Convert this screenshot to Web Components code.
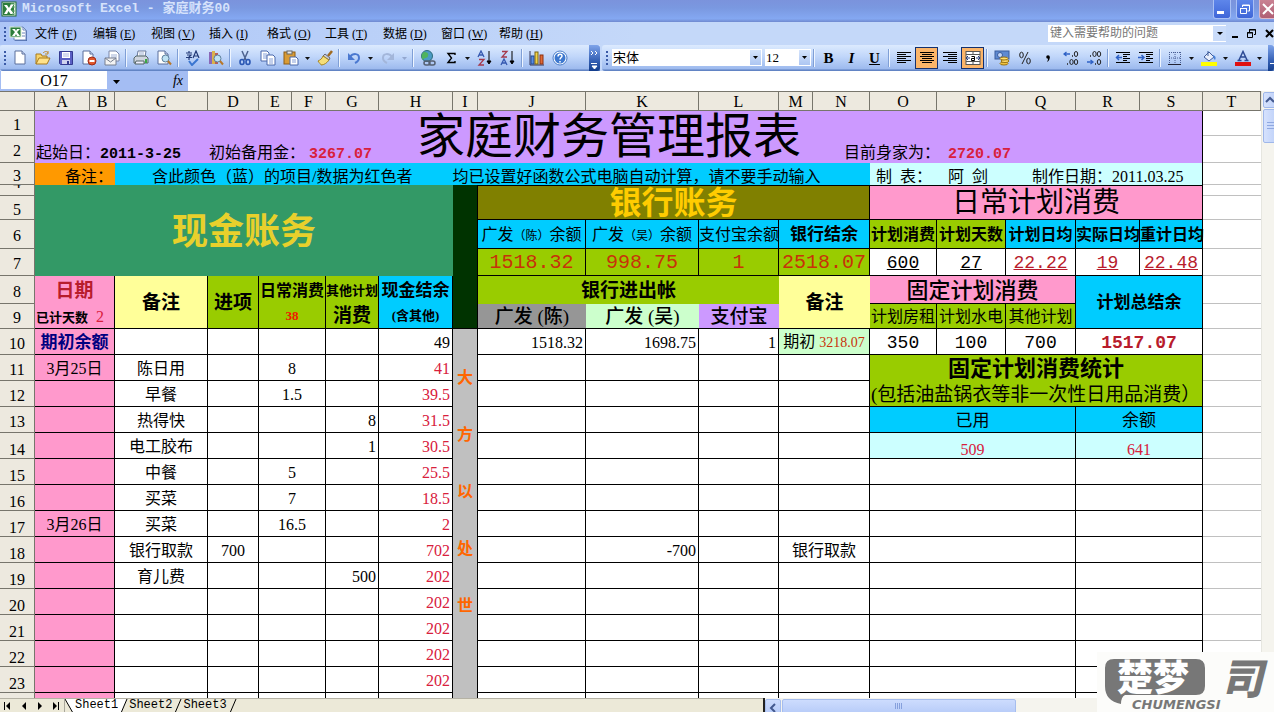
<!DOCTYPE html>
<html lang="zh-CN">
<head>
<meta charset="utf-8">
<title>Microsoft Excel - 家庭财务00</title>
<style>
html, body { height: 100%; margin: 0; overflow: hidden; }
body { font-family: "Liberation Serif", "Noto Sans CJK SC", serif; font-size: 16px; color: #000; }
</style>
</head>
<body>
<excel-window>
  <title-bar slot="bars">Microsoft Excel - 家庭财务00</title-bar>
  <menu-bar slot="bars"></menu-bar>
  <tool-rows slot="bars"></tool-rows>
  <formula-bar slot="bars"></formula-bar>
  <sheet-grid slot="sheet"></sheet-grid>
  <sheet-tabs slot="foot"></sheet-tabs>
  <brand-mark slot="over"></brand-mark>
</excel-window>

<script>
const RESET = `
  * { box-sizing: border-box; }
  button, select, input { margin: 0; padding: 0; border: 0; background: none; font: inherit; color: inherit; border-radius: 0; outline: none; }
  svg { display: block; }
`;

function define(name, css, html) {
  customElements.define(name, class extends HTMLElement {
    constructor() {
      super();
      const root = this.attachShadow({ mode: "open" });
      root.innerHTML = `<style>${RESET}${css}</style>` + (typeof html === "function" ? html(this) : html);
    }
  });
}

define("excel-window", `
  :host { display: flex; flex-direction: column; height: 100vh; position: relative; overflow: hidden; background: #fff; }
  main { flex: 1; min-height: 0; display: flex; }
`, `<slot name="bars"></slot><main><slot name="sheet"></slot></main><slot name="foot"></slot><slot name="over"></slot>`);

/* ---------- title bar ---------- */
const LOGO = `<svg width="16" height="16" viewBox="0 0 16 16"><rect x="1" y="1" width="14" height="14" fill="#e9f3e4" stroke="#1c6b34"/><rect x="2" y="2" width="11" height="12" fill="#2c7d3c"/><path d="M3 4h3l2 3 2-4h3L9.500 8.500 13 13H9.500L7.500 10 6 13H3l3-5z" fill="#fff"/><path d="M10 3h4M11 6h3M11 10h3M11 13h3" stroke="#6aa978"/></svg>`;
const BOOK = `<svg width="20" height="16" viewBox="0 0 20 16"><path d="M6 2h9l3 3v10H6z" fill="#4f6fae"/><path d="M5 1h9l3 3v10H5z" fill="#fff" stroke="#6d86bc"/><path d="M14 1v3h3M13 7h3M13 10h3" fill="none" stroke="#6d86bc"/><rect x="1" y="1" width="11" height="10" fill="#2c7d3c" stroke="#d6ecd4"/><path d="M3 3h3l1 2 1-2h3L8 6l3 4H8L7 8l-1 2H3l3-4z" fill="#fff"/></svg>`;

define("title-bar", `
  :host { display: flex; align-items: center; height: 22px; flex: none; padding-left: 1px; gap: 5px; overflow: hidden;
    background: linear-gradient(#7b93dc, #7a98e0 35%, #84a8f2 85%, #7089cf);
    color: #d6e2fb; font: bold 13px/18px "Liberation Mono", "Noto Sans CJK SC", monospace; }
  h1 { flex: 1; margin: 0; padding-bottom: 4px; font: inherit; white-space: nowrap; }
  .logo svg { margin-bottom: 4px; }
  .ctl { display: flex; gap: 5px; align-self: flex-start; margin-right: -3px; }
  button { width: 18px; height: 19px; border: 1px solid #a9c0f5; border-top: 0; border-radius: 0 0 3px 3px; background: linear-gradient(#5e86ea, #3f66d8); display: grid; place-items: center; }
  button.x { background: linear-gradient(#c98293, #b05f74); border-color: #dcb6c4; }
`, `<span class="logo">${LOGO}</span><h1><slot></slot></h1>
  <div class="ctl">
    <button aria-label="最小化"><svg width="14" height="14"><rect x="2" y="9" width="7" height="3" fill="#fff"/></svg></button>
    <button aria-label="还原"><svg width="14" height="14" fill="none" stroke="#fff"><path d="M4.500 5V3h7v6H9.500M4 3.500h8"/><path d="M2.500 6.500h6v5h-6zM2 6.500h7"/></svg></button>
    <button class="x" aria-label="关闭"><svg width="14" height="14" stroke="#fff" stroke-width="2"><path d="M2 2l10 10M12 2L2 12"/></svg></button>
  </div>`);

/* ---------- menu bar ---------- */
const MENUS = [["文件","F"],["编辑","E"],["视图","V"],["插入","I"],["格式","O"],["工具","T"],["数据","D"],["窗口","W"],["帮助","H"]];

define("grip-handle", `
  :host { display: block; flex: none; width: 8px; height: 14px; }
`, `<svg width="8" height="14"><path d="M4 0h2v2H4zM4 4h2v2H4zM4 8h2v2H4zM4 12h2v2H4z" fill="#3a5aa6"/></svg>`);

define("menu-bar", `
  :host { display: flex; align-items: center; height: 23px; flex: none; background: linear-gradient(90deg, #acc5f7, #c4d8f9 50%); font-size: 12px; line-height: 18px; overflow: hidden; }
  nav { flex: 1; display: flex; padding-left: 1px; }
  nav button { width: 58px; text-align: left; padding-left: 2px; white-space: nowrap; }
  nav .book { width: 24px; padding-left: 0; }
  .ask { display: flex; height: 17px; background: #fff; margin-right: 4px; margin-bottom: 1px; }
  .ask input { width: 165px; padding-left: 2px; font-size: 12px; }
  .ask input::placeholder { color: #777; opacity: 1; }
  .ask button { width: 13px; margin: 1px 0; background: #cadcfa; }
  .win { display: flex; gap: 4px; }
`, `<grip-handle></grip-handle><nav>
    <button class="book" aria-label="工作簿">${BOOK}</button>
    ${MENUS.map(([t, k]) => `<button>${t} (<u>${k}</u>)</button>`).join("")}</nav>
  <div class="ask"><input aria-label="帮助" placeholder="键入需要帮助的问题"><button aria-label="展开"><svg width="13" height="14"><path d="M4 6h6l-3 3z"/></svg></button></div>
  <div class="win">
    <button aria-label="最小化"><svg width="12" height="12"><rect x="2" y="8" width="6" height="2"/></svg></button>
    <button aria-label="还原"><svg width="12" height="12" fill="none" stroke="#000"><path d="M3.500 4V1.500h6v5H8M3 2h7M1.500 4.500h5v5h-5zM1 5h6"/></svg></button>
    <button aria-label="关闭"><svg width="12" height="12" stroke="#000" stroke-width="2"><path d="M4 2l7 7M11 2L4 9"/></svg></button>
  </div>`);

/* ---------- toolbars ---------- */
const svg = (s, extra = "") => `<svg width="16" height="16" viewBox="0 0 16 16" ${extra}>${s}</svg>`;
const page = (x = 3, y = 1) => `<path d="M${x} ${y}h7l3 3v10h-10z" fill="#fff" stroke="#5b6f9c"/><path d="M${x + 7} ${y}v3h3" fill="#cfdcf5" stroke="#5b6f9c"/>`;
const glass = `<circle cx="9.500" cy="8.500" r="3.500" fill="#bfe2f3" stroke="#5d7f9c"/><path d="M12 11l3 3.500" stroke="#b8782b" stroke-width="2"/>`;
const lines = (a) => `<path d="${a.map(([x, y, w]) => `M${x} ${y}.500h${w}`).join("")}" stroke="#000"/>`;
const ICON = {
  新建: svg(page()),
  打开: svg(`<path d="M1 14V4h5l1 2h5v3" fill="#f6d36b" stroke="#a87a1c"/><path d="M1 14l3-6h11l-3 6z" fill="#ffe28a" stroke="#a87a1c"/><path d="M8 3c2-2 4-2 5 0m0-2v3h-3" fill="none" stroke="#c08a2a"/>`),
  保存: svg(`<path d="M1.500 1.500h13v13h-12l-1-1z" fill="#5a5fc4" stroke="#343a90"/><rect x="4" y="2" width="8" height="6" fill="#fff"/><path d="M5 4h6M5 6h6" stroke="#a9b4e0"/><rect x="4" y="10" width="8" height="4" fill="#cfd3ee"/><rect x="9" y="11" width="2" height="3" fill="#343a90"/>`),
  权限: svg(page(2) + `<circle cx="11" cy="11" r="4" fill="#e0572c" stroke="#a02a18"/><path d="M8.500 11h5" stroke="#fff" stroke-width="2"/>`),
  电子邮件: svg(`<path d="M5 1h7l3 3v7H5z" fill="#fff" stroke="#7a86a8"/><path d="M7 5h6M7 7h6" stroke="#9fb0d4"/><path d="M1 8h11v7H1z" fill="#f3f3f3" stroke="#777f90"/><path d="M1 8l5.500 4L12 8" fill="none" stroke="#777f90"/>`),
  打印: svg(`<path d="M5 1h8l-1 6H4z" fill="#fff" stroke="#69799c"/><path d="M6 3h5M6 5h5" stroke="#9fb0d4"/><path d="M1 8l2-2h10l2 2v5H1z" fill="#cfd5df" stroke="#566"/><path d="M3 11h8v3H2z" fill="#eef" stroke="#566"/><path d="M12 9h2v4h-2z" fill="#3aa845"/>`),
  打印预览: svg(page(2) + glass),
  拼写检查: svg(`<path d="M1 3h6M4 1v2M2 5h4l-2 2v3M1 7.500h6M8 8l3-7 3 7M9 6h4" fill="none" stroke="#223a78" stroke-width="1.200"/><path d="M4 11l3 4 6-6" fill="none" stroke="#3a75d0" stroke-width="2"/>`),
  信息检索: svg(`<path d="M1 2h3v12H1z" fill="#8a68b8"/><path d="M4 1h3v13H4z" fill="#d9b34c"/><path d="M7 3h3v11H7z" fill="#b85d58"/>` + glass),
  剪切: svg(`<path d="M5 1l4 9M11 1L7 10" stroke="#4d628f" stroke-width="1.500"/><ellipse cx="5" cy="12" rx="2" ry="2.500" fill="none" stroke="#2b58b4" stroke-width="1.600"/><ellipse cx="11" cy="12" rx="2" ry="2.500" fill="none" stroke="#2b58b4" stroke-width="1.600"/>`),
  复制: svg(`<path d="M1 1h6l2 2v8H1z" fill="#fff" stroke="#4a68ab"/><path d="M3 4h4M3 6h4M3 8h4" stroke="#86a0d8"/><path d="M7 5h6l2 2v8H7z" fill="#fff" stroke="#4a68ab"/><path d="M9 9h4M9 11h4M9 13h4" stroke="#86a0d8"/>`),
  粘贴: svg(`<rect x="1" y="2" width="11" height="12" fill="#d99b35" stroke="#8e5c14"/><rect x="4" y="1" width="5" height="3" fill="#e9e9e9" stroke="#666"/><path d="M7 7h6l2 2v6H7z" fill="#fff" stroke="#4a68ab"/><path d="M9 10h4M9 12h4" stroke="#86a0d8"/>`),
  格式刷: svg(`<path d="M15 1l-4 5" stroke="#a06a20" stroke-width="2.500"/><path d="M8 4l5 4-1 2-6-4z" fill="#c9ccd6" stroke="#667"/><path d="M6 6l6 4c-2 3-5 5-8 5 0-1-2-2-3-4 2-1 4-2 5-5z" fill="#f5de78" stroke="#a58525"/>`),
  撤销: svg(`<path d="M4 7c3-4 9-4 9 1 0 3-2 4-4 5" fill="none" stroke="#4a78d0" stroke-width="2"/><path d="M2 3v7h7z" fill="#4a78d0"/>`),
  恢复: svg(`<path d="M12 7c-3-4-9-4-9 1 0 3 2 4 4 5" fill="none" stroke="#a3b6da" stroke-width="2"/><path d="M14 3v7H7z" fill="#a3b6da"/>`),
  超链接: svg(`<circle cx="7" cy="6" r="5.500" fill="#4a9bc4" stroke="#2c6a7a"/><path d="M4 2c3 0 5 1 4 4s-4 1-5 4c-2-3-2-6 1-8z" fill="#4fb35e"/><rect x="4" y="11" width="6" height="4" rx="2" fill="none" stroke="#555f70" stroke-width="1.500"/><rect x="9" y="11" width="6" height="4" rx="2" fill="none" stroke="#555f70" stroke-width="1.500"/>`),
  自动求和: svg(`<path d="M12 5V3.500H5L8.500 8 5 12.500h7V11" fill="none" stroke="#000" stroke-width="1.400"/>`),
  升序: svg(`<path d="M1 7l3-6 3 6M2 5h4" fill="none" stroke="#3558b0" stroke-width="1.300"/><path d="M2 9.500h5L2 15h5" fill="none" stroke="#a5394c" stroke-width="1.300"/><path d="M12 1v12M10 11l2 3 2-3z" stroke="#000"/>`),
  降序: svg(`<path d="M2 1.500h5L2 7h5" fill="none" stroke="#a5394c" stroke-width="1.300"/><path d="M1 15l3-6 3 6M2 13h4" fill="none" stroke="#3558b0" stroke-width="1.300"/><path d="M12 1v12M10 11l2 3 2-3z" stroke="#000"/>`),
  图表向导: svg(`<path d="M1 1v14h14" fill="none" stroke="#335"/><rect x="2" y="6" width="3" height="8" fill="#5a8de0" stroke="#234a94"/><rect x="6" y="2" width="3" height="12" fill="#f2d34a" stroke="#7a6510"/><rect x="11" y="5" width="3" height="9" fill="#e06a38" stroke="#8c3010"/>`),
  帮助: svg(`<circle cx="8" cy="8" r="7" fill="#fff" stroke="#4a7cc8"/><circle cx="8" cy="8" r="5.500" fill="#3d78cf"/><path d="M6 6.500c0-3 4-3 4-.5 0 1.500-2 1.500-2 3.500M8 11v1.500" fill="none" stroke="#fff" stroke-width="1.500"/>`),
  左对齐: svg(lines([[1,2,14],[1,4,9],[1,6,14],[1,8,9],[1,10,14],[1,12,9]])),
  居中: svg(lines([[1,2,14],[3,4,10],[1,6,14],[3,8,10],[1,10,14],[3,12,10]])),
  右对齐: svg(lines([[1,2,14],[6,4,9],[1,6,14],[6,8,9],[1,10,14],[6,12,9]])),
  合并及居中: svg(`<rect x="1" y="1.500" width="14" height="13" fill="#fff" stroke="#555"/><path d="M1 4.500h14M1 11.500h14M8 1v3M8 12v3" stroke="#555"/><path d="M1 8h4M15 8h-4M3 6L1 8l2 2M13 6l2 2-2 2" fill="none" stroke="#223a78"/><path d="M6.500 6.500h3v4h-3v-2h3" fill="none" stroke="#000"/>`),
  货币样式: svg(`<rect x="1" y="1" width="14" height="8" fill="#5f8ad2" stroke="#3a5c9c"/><circle cx="6" cy="5" r="2.500" fill="#c3d6f6" stroke="#3a5c9c"/><ellipse cx="10" cy="13.500" rx="4" ry="1.500" fill="#f0c340" stroke="#9a7210"/><ellipse cx="11" cy="11" rx="4" ry="1.500" fill="#ffdf70" stroke="#9a7210"/><ellipse cx="10" cy="8.500" rx="4" ry="1.500" fill="#ffdf70" stroke="#9a7210"/>`),
  百分比样式: svg(`<ellipse cx="4.500" cy="5" rx="1.800" ry="2.800" fill="none" stroke="#222"/><ellipse cx="11.500" cy="11" rx="1.800" ry="2.800" fill="none" stroke="#222"/><path d="M11 2L5 14" stroke="#222"/>`),
  千位分隔样式: svg(`<circle cx="8" cy="7" r="1.800"/><path d="M9.700 7c0 3-1 4-2.700 5 1-2 1-3 1-4z"/>`),
  增加小数位数: svg(`<path d="M7 4H1M3.500 2L1 4l2.500 2" fill="none" stroke="#2f62c6" stroke-width="1.300"/><ellipse cx="13" cy="4" rx="1.700" ry="2.500" fill="none" stroke="#222"/><ellipse cx="8.500" cy="12" rx="1.700" ry="2.500" fill="none" stroke="#222"/><ellipse cx="13" cy="12" rx="1.700" ry="2.500" fill="none" stroke="#222"/><path d="M9 6h1M4 14h1" stroke="#222" stroke-width="1.500"/>`),
  减少小数位数: svg(`<path d="M1 12h6M4.500 10L7 12l-2.500 2" fill="none" stroke="#2f62c6" stroke-width="1.300"/><ellipse cx="8.500" cy="4" rx="1.700" ry="2.500" fill="none" stroke="#222"/><ellipse cx="13" cy="4" rx="1.700" ry="2.500" fill="none" stroke="#222"/><ellipse cx="13" cy="12" rx="1.700" ry="2.500" fill="none" stroke="#222"/><path d="M4 6h1M9 14h1" stroke="#222" stroke-width="1.500"/>`),
  减少缩进量: svg(lines([[1,2,14],[8,4,7],[8,6,4],[8,8,7],[8,10,4],[1,12,14]]) + `<path d="M7 7.500H2M4 5L1.500 7.500 4 10" fill="none" stroke="#2f62c6" stroke-width="1.500"/>`),
  增加缩进量: svg(lines([[1,2,14],[8,4,7],[8,6,4],[8,8,7],[8,10,4],[1,12,14]]) + `<path d="M0 7.500h5M3.500 5L6 7.500 3.500 10" fill="none" stroke="#2f62c6" stroke-width="1.500"/>`),
  边框: svg(`<path d="M2 2.500h12M2 8h12M2.500 2v12M8 2v12M13.500 2v12" stroke="#4a5f94" stroke-dasharray="1 1"/><path d="M1 14.500h13" stroke="#223"/>`),
  填充颜色: svg(`<path d="M3 7l5-5 5 5-5 4z" fill="#e8eefb" stroke="#3f5c9a"/><path d="M7 1v5" stroke="#3f5c9a"/><path d="M12 5c3 1 3 3 2 5-1-1-2-2-2-5z" fill="#4a82d8"/><rect x="0" y="12" width="16" height="4" fill="#ffff00"/>`),
  字体颜色: svg(`<path d="M4 10L8 1.500 12 10M5.500 7h5M2.500 10.500h4M9.500 10.500h4" fill="none" stroke="#2c4a94" stroke-width="1.500"/><rect x="0" y="12" width="16" height="4" fill="#e01010"/>`)
};

define("tool-button", `
  :host { display: block; flex: none; }
  button { width: 23px; height: 22px; display: grid; place-items: center; font: bold 15px/20px "Liberation Serif", serif; }
  :host([pressed]) button { background: #fbb569; border: 1px solid #14306e; }
`, el => `<button aria-label="${el.getAttribute("label") || ""}">${ICON[el.getAttribute("label")] || ""}<slot></slot></button>`);

define("drop-arrow", `
  :host { display: block; flex: none; }
  button { width: 11px; height: 22px; display: grid; place-items: center; }
  svg { fill: #111; }
  :host([dim]) svg { fill: #93a7cf; }
`, `<button aria-label="更多"><svg width="5" height="3"><path d="M0 0h5L2.500 3z"/></svg></button>`);

define("combo-box", `
  :host { display: block; position: relative; flex: none; height: 17px; background: #fff; font-size: 13px; margin-bottom: 2px; }
  select { appearance: none; display: block; width: 100%; height: 100%; padding-left: 1px; line-height: 17px; }
  svg { position: absolute; right: 1px; top: 1px; pointer-events: none; background: linear-gradient(#d5e4fc, #adc6f2); }
`, el => `<select aria-label="${el.getAttribute("label")}"><option>${el.getAttribute("value")}</option></select>
  <svg width="11" height="15"><path d="M3 6h5L5.500 9z"/></svg>`);

const b = (n, a = "") => `<tool-button label="${n}" ${a}></tool-button>`;
const sep = `<i></i>`, arr = `<drop-arrow></drop-arrow>`;
define("tool-rows", `
  :host { display: flex; height: 26px; flex: none; gap: 2px; background: #c4d8f9; }
  section { display: flex; align-items: center; background: linear-gradient(#dceafe, #c0d6fa 45%, #9dbaee 92%, #6284c4 96%); border-radius: 3px 0 0 3px; overflow: hidden; }
  .fmt { flex: 1; }
  i { flex: none; width: 6px; height: 18px; background: linear-gradient(#7f9fd6, #7f9fd6) 2px 0 / 1px 100% no-repeat, linear-gradient(#eef5ff, #eef5ff) 3px 0 / 1px 100% no-repeat; }
  .cap { flex: none; align-self: stretch; width: 11px; margin-left: 18px; background: linear-gradient(#7fa4ea, #3560b4 60%, #123d8c); display: flex; align-items: flex-end; border-radius: 0 3px 3px 0; }
  .fmt .cap { margin-left: auto; width: 6px; }
  combo-box { margin-right: 3px; }
  .face { width: 150px; margin-left: 2px; }
  .size { width: 46px; margin-right: 0; }
`, `<section role="toolbar" aria-label="常用"><grip-handle></grip-handle>
  ${["新建","打开","保存","权限","电子邮件"].map(n => b(n)).join("")}${sep}${b("打印")}${b("打印预览")}${sep}${b("拼写检查")}${b("信息检索")}${sep}
  ${b("剪切")}${b("复制")}${b("粘贴")}${arr}${b("格式刷")}${sep}${b("撤销")}${arr}${b("恢复")}<drop-arrow dim></drop-arrow>${sep}
  ${b("超链接")}${b("自动求和")}${arr}${b("升序")}${b("降序")}${sep}${b("图表向导")}${b("帮助")}
  <span class="cap"><svg width="11" height="25" fill="none" stroke="#fff"><path d="M2 5l2 2-2 2M6 5l2 2-2 2M2 17.500h6"/><path d="M3 20h5l-2.500 3z" fill="#fff"/></svg></span></section>
<section class="fmt" role="toolbar" aria-label="格式"><grip-handle></grip-handle>
  <combo-box class="face" label="字体" value="宋体"></combo-box><combo-box class="size" label="字号" value="12"></combo-box>${sep}
  <tool-button label="加粗">B</tool-button><tool-button label="倾斜"><em>I</em></tool-button><tool-button label="下划线"><u>U</u></tool-button>${sep}
  ${b("左对齐")}${b("居中", "pressed")}${b("右对齐")}${b("合并及居中", "pressed")}${sep}
  ${b("货币样式")}${b("百分比样式")}${b("千位分隔样式")}${b("增加小数位数")}${b("减少小数位数")}${sep}${b("减少缩进量")}${b("增加缩进量")}${sep}
  ${b("边框")}${arr}${b("填充颜色")}${arr}${b("字体颜色")}${arr}
  <span class="cap"><svg width="6" height="25" stroke="#fff"><path d="M2 17.500h4"/></svg></span></section>`);

/* ---------- formula bar ---------- */
define("formula-bar", `
  :host { display: flex; height: 20px; flex: none; background: #a4bdf3; }
  .name { width: 107px; height: 18px; padding-top: 1px; background: #fff; text-align: center; font-size: 16px; border-left: 1px solid #a4bdf3; }
  .tools { display: flex; justify-content: space-between; width: 81px; padding: 0 5px 0 3px; }
  .fx { font: italic 14px/18px "Liberation Serif", serif; }
  .line { flex: 1; min-width: 0; background: #fff; }
`, `<input class="name" aria-label="名称框" value="O17">
  <div class="tools"><button aria-label="名称列表"><svg width="12" height="18"><path d="M3 8h7l-3.500 4z"/></svg></button><button class="fx">fx</button></div>
  <input class="line" aria-label="编辑栏">`);

/* ---------- worksheet ---------- */
const COLS = [["A",55],["B",25],["C",93],["D",51],["E",33],["F",34],["G",53],["H",74],["I",25],["J",108],["K",113],["L",80],["M",34],["N",57],["O",67],["P",69],["Q",70],["R",64],["S",63],["T",0]];
const HEIGHTS = [25,27,22,11,24,29,27,28,25];
const td = (text = "", cls = "", cs = 1, rs = 1) => `<td class="${cls}"${cs > 1 ? ` colspan="${cs}"` : ""}${rs > 1 ? ` rowspan="${rs}"` : ""}>${text}</td>`;

/* cells of each row, left to right; the class names give fill, ink and size */
const TOP = {
  1: td("起始日：<b class='n15'>2011-3-25</b>", "purple open low l", 3, 2) + td("初始备用金： <b class='n15 rose'>3267.07</b>", "purple open low l", 4, 2)
     + td("家庭财务管理报表", "purple open s48 r title", 6, 2) + td("目前身家为：&ensp;<b class='n15 rose'>2720.07</b>", "purple nb low l worth", 6, 2),
  2: "",
  3: td("备注：", "orange open low r note", 2) + td("<span class='tips'><span>含此颜色（蓝）的项目/数据为红色者</span><span>均已设置好函数公式电脑自动计算，请不要手动输入</span></span>", "cyan open low l tipcell", 12)
     + td("<span class='made'><span>制&ensp;表：</span><span>阿&ensp;剑</span><span>制作日期：2011.03.25</span></span>", "ice nb low l", 5),
  4: td("现金账务", "sea open s36 gold b", 8, 4) + td("", "dark", 1, 6) + td("银行账务", "olive top s32 gold2 b", 5, 2) + td("日常计划消费", "pink top s28", 5, 2),
  5: "",
  6: td("广发<small>（陈）</small>余额", "cyan") + td("广发<small>（吴）</small>余额", "cyan") + td("支付宝余额", "cyan") + td("银行结余", "cyan b s17", 2)
     + td("计划消费", "green b") + td("计划天数", "green b") + td("计划日均", "cyan b") + td("实际日均", "cyan b") + td("重计日均", "cyan b"),
  7: td("1518.32", "green n20 brick") + td("998.75", "green n20 brick") + td("1", "green n20 brick") + td("2518.07", "green n20 brick", 2)
     + td("<u>600</u>", "n18") + td("<u>27</u>", "n18") + td("<u>22.22</u>", "n18 crim") + td("<u>19</u>", "n18 crim") + td("<u>22.48</u>", "n18 crim"),
  8: td("日期", "pink nb b s19 crim", 2) + td("备注", "yellow b s19", 1, 2) + td("进项", "green b s19", 1, 2)
     + td("<p>日常消费</p><p class='s13 red'>38</p>", "green b", 2, 2) + td("<p class='s13'>其他计划</p><p class='s19'>消费</p>", "green b", 1, 2)
     + td("<p class='s17'>现金结余</p><p class='s13'>(含其他)</p>", "cyan b", 1, 2)
     + td("银行进出帐", "green open b s19", 3) + td("备注", "yellow nr b s19", 2, 2) + td("固定计划消费", "pink s22 m", 3) + td("计划总结余", "cyan b s17", 2, 2),
  9: td("<b class='s13'>已计天数</b>&ensp;<span class='rose'>2</span>", "pink l", 2) + td("广发 (陈)", "gray nr s19 m") + td("广发 (吴)", "mint nr s19 m") + td("支付宝", "purple nr s19 m")
     + td("计划房租", "green") + td("计划水电", "green") + td("其他计划", "green"),
  10: td("期初余额", "pink b s17 navy", 2) + td() + td() + td("", "", 2) + td() + td("49", "r")
     + td("<p>大</p><p>方</p><p>以</p><p>处</p><p>世</p>", "silver motto nb", 1, 15)
     + td("1518.32", "r") + td("1698.75", "r") + td("1", "r") + td("期初 <span class='s14 brick'>3218.07</span>", "mint", 2)
     + td("350", "n18") + td("100", "n18") + td("700", "n18") + td("1517.07", "n18 b crim", 2)
};
/* date, item, income, daily, planned, balance */
const DATA = {
  11: ["3月25日","陈日用","","8","","41"], 12: ["","早餐","","1.5","","39.5"], 13: ["","热得快","","","8","31.5"],
  14: ["","电工胶布","","","1","30.5"], 15: ["","中餐","","5","","25.5"], 16: ["","买菜","","7","","18.5"],
  17: ["3月26日","买菜","","16.5","","2"], 18: ["","银行取款","700","","","702"], 19: ["","育儿费","","","500","202"],
  20: ["","","","","","202"], 21: ["","","","","","202"], 22: ["","","","","","202"], 23: ["","","","","","202"], 24: ["","","","","",""]
};
const RIGHT = {
  11: td("固定计划消费统计", "green nb b s22", 5),
  12: td("(包括油盐锅衣等非一次性日用品消费）", "green s19 l", 5),
  13: td("已用", "cyan s17", 3) + td("余额", "cyan s17", 2),
  14: td("509", "ice rose low", 3) + td("641", "ice rose low", 2)
};
const dataRow = n => {
  const [d, item, inc, day, plan, bal] = DATA[n];
  return td(d, "pink", 2) + td(item) + td(inc) + td(day, "", 2) + td(plan, "r") + td(bal, "r rose")
    + td() + td(n === 18 ? "-700" : "", "r") + td() + td(n === 18 ? "银行取款" : "", "", 2)
    + (RIGHT[n] || td("", "", 3) + td("", "", 2));
};
const label = n => n === 4 ? `<div><span>4</span></div>` : n === 24 ? "" : n;
const body = Array.from({ length: 24 }, (_, i) => i + 1).map(n =>
  `<tr style="height:${HEIGHTS[n - 1] || 26}px"><th scope="row" class="${n === 4 ? "tiny" : n > 13 ? "late" : ""}">${label(n)}</th>${n in TOP ? TOP[n] : dataRow(n)}<td class="free"></td></tr>`).join("");

define("sheet-grid", `
  :host { flex: 1; min-width: 0; display: flex; overflow: hidden; }
  .view { flex: 1; min-width: 0; overflow: hidden; border-right: 1px solid #e6e6e0; }
  table { table-layout: fixed; width: 100%; min-width: 1235px; border-collapse: separate; border-spacing: 0; font-size: 16px; line-height: 20px; }
  th, td { padding: 0; font-weight: normal; white-space: nowrap; text-align: center; vertical-align: middle; border: solid #000; border-width: 0 1px 1px 0; }
  td { padding-top: 2px; }
  thead th { height: 20px; line-height: 16px; padding-top: 2px; background: #ede9df; border-color: #77756c; border-top: 1px solid #77756c; }
  tbody th { background: #ede9df; border-color: #77756c; line-height: 16px; padding-top: 4px; }
  tbody th.late { vertical-align: bottom; padding: 0; }
  tbody th.tiny { padding: 0; }
  .tiny div { display: flow-root; height: 10px; overflow: hidden; }
  .tiny span { display: block; margin-top: -10px; }
  td.free { border-color: #c0c0c0; border-right-width: 0; }
  p { margin: 0; line-height: 25px; }
  small { font-size: 12px; }
  .r { text-align: right; padding-right: 2px; } .l { text-align: left; padding-left: 1px; }
  .low { vertical-align: bottom; line-height: 16px; }
  .nb, .open { border-bottom-width: 0; } .nr, .open { border-right-width: 0; }
  .top { border-top-width: 1px; padding-top: 0; }
  .b { font-weight: bold; } .m { font-weight: 500; }
  .s13 { font-size: 13px; } .s14 { font-size: 14px; } .s17 { font-size: 17px; } .s19 { font-size: 19px; }
  .s22 { font-size: 22px; } .s28 { font-size: 28px; line-height: 32px; } .s32 { font-size: 32px; line-height: 32px; }
  .s36 { font-size: 36px; line-height: 40px; } .s48 { font-size: 48px; line-height: 50px; }
  .n15, .n18, .n20 { font-family: "Liberation Mono", monospace; }
  .n15 { font-size: 15px; } .n18 { font-size: 18px; } .n20 { font-size: 20px; }
  .purple { background: #c9f; } .orange { background: #f90; } .cyan { background: #0cf; } .ice { background: #cff; } .sea { background: #396; }
  .dark { background: #030; } .olive { background: #808000; } .pink { background: #f9c; } .green { background: #9c0; } .yellow { background: #ff9; }
  .gray { background: #969696; } .mint { background: #cfc; } .silver { background: #c0c0c0; }
  .rose { color: #d8203c; } .crim { color: #b81c2c; } .brick { color: #c8320a; } .red { color: #f01800; } .gold { color: #e8d02c; } .gold2 { color: #fc0; } .navy { color: #000080; }
  td.title { padding: 0 12px 0 0; } td.worth { padding-left: 31px; } td.note { padding-right: 2px; } td.tipcell { padding-left: 37px; }
  .tips { display: flex; gap: 40px; } .made { display: flex; gap: 16px; padding-left: 5px; } .made span:last-child { margin-left: 28px; }
  .motto { vertical-align: top; padding-top: 20px; color: #f60; font-weight: bold; }
  .motto p { line-height: 57px; }
  .bar { flex: none; width: 12px; overflow: hidden; background: #f5f4ee; display: flex; flex-direction: column; padding: 1px 0 0 1px; gap: 1px; }
  .bar button { width: 17px; height: 16px; background: linear-gradient(90deg, #d6e2fd, #b9cdf8); border: 1px solid #9fb7ea; border-radius: 2px; }
  .bar .thumb { height: 34px; }
`, `<div class="view"><table><colgroup><col style="width:35px">${COLS.map(([, w]) => `<col${w ? ` style="width:${w}px"` : ""}>`).join("")}</colgroup>
  <thead><tr><th></th>${COLS.map(([c]) => `<th scope="col">${c}</th>`).join("")}</tr></thead><tbody>${body}</tbody></table></div>
  <div class="bar"><button aria-label="向上"><svg width="11" height="14" fill="none" stroke="#43598f" stroke-width="2"><path d="M2 9l4-4 4 4"/></svg></button>
  <button class="thumb" aria-label="滚动"><svg width="11" height="12" stroke="#8fa8e0"><path d="M3 2.500h8M3 5.500h8M3 8.500h8"/></svg></button></div>`);

/* ---------- sheet tabs and horizontal scroll ---------- */
define("sheet-tabs", `
  :host { display: flex; height: 14px; flex: none; overflow: hidden; background: #ece9d8; font: 12px/14px "Liberation Mono", monospace; }
  .left { flex: 3; display: flex; min-width: 0; border-top: 1px solid #b5b2a4; }
  .nav { display: flex; width: 65px; justify-content: space-around; border-right: 1px solid #aaa89c; }
  .tabs { display: flex; }
  .tabs button { display: flex; height: 13px; line-height: 13px; }
  .tabs .on { background: #fff; }
  .scroll { flex: 2; display: flex; gap: 1px; border-left: 2px solid #222; background: #f5f4ee; padding-top: 1px; }
  .scroll button { height: 17px; border: 1px solid #a6bdee; border-radius: 2px; background: linear-gradient(#cddcfe, #b4c9f7); }
  .prev { width: 16px; } .thumb { width: 46%; display: grid; justify-items: center; }
`, `<div class="left"><div class="nav">
   <button aria-label="第一张"><svg width="12" height="14"><path d="M2 3h1v8H2zM8 3v8L4 7z"/></svg></button>
   <button aria-label="上一张"><svg width="12" height="14"><path d="M8 3v8L4 7z"/></svg></button>
   <button aria-label="下一张"><svg width="12" height="14"><path d="M4 3v8l4-4z"/></svg></button>
   <button aria-label="最后一张"><svg width="12" height="14"><path d="M3 3v8l4-4zM8 3h1v8H8z"/></svg></button></div>
   <div class="tabs">
   <button class="on"><svg width="10" height="14" stroke="#000"><path d="M0 0v14h8z" fill="#ece9d8" stroke="none"/><path d="M0 0l8 14"/></svg>Sheet1</button>
   <button><svg width="11" height="14" stroke="#000"><path d="M0 0h9L3 14H0z" fill="#fff" stroke="none"/><path d="M9 0L3 14"/></svg>Sheet2</button>
   <button><svg width="11" height="14" stroke="#000"><path d="M9 0L3 14"/></svg>Sheet3</button>
   <svg width="11" height="14" stroke="#000"><path d="M9 0L3 14"/></svg></div></div>
  <div class="scroll"><button class="prev" aria-label="向左"><svg width="14" height="12" fill="none" stroke="#43598f" stroke-width="2"><path d="M9 2L5 6l4 4"/></svg></button>
   <button class="thumb" aria-label="滚动"><svg width="12" height="12" stroke="#86a0dc"><path d="M2.500 3v6M4.500 3v6M6.500 3v6M8.500 3v6"/></svg></button></div>`);

/* ---------- corner mark ---------- */
define("brand-mark", `
  :host { position: absolute; right: 0; bottom: 0; width: 177px; height: 60px; background: #fcfcfa; color: #777; overflow: hidden; }
  svg { position: absolute; left: 0; top: 0; }
  .chu, .si, .en { position: absolute; white-space: nowrap; font-family: "Noto Sans CJK SC", sans-serif; font-weight: 900; }
  .chu { left: 20px; top: 6px; font-size: 36px; line-height: 34px; color: #fff; }
  .si { left: 124px; top: 3px; font-size: 42px; line-height: 42px; font-style: italic; }
  .en { left: 35px; bottom: 0; font: italic bold 13px/14px "DejaVu Sans", sans-serif; }
`, `<svg width="177" height="60"><path d="M8 16q0-9 9-9h82q9 0 9 9v18q0 9-9 9H28q-4 2-4 9-16-3-16-18z" fill="#777"/></svg>
  <span class="chu">楚梦</span><span class="si">司</span><span class="en">CHUMENGSI</span>`);
</script>
</body>
</html>
